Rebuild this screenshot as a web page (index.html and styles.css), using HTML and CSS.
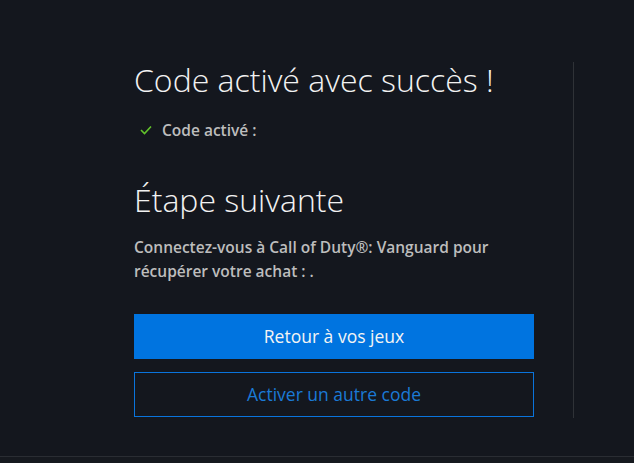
FILE: index.html
```html
<!DOCTYPE html>
<html lang="fr">
<head>
    <meta charset="UTF-8">
    <title>Code activé</title>
    <link rel="stylesheet" href="styles.css">
</head>
<body>
<div class="page">
    <main class="redeem">
        <section class="result">
            <h1>Code activé avec succès !</h1>
            <ul class="codes">
                <li>
                    <svg class="check" width="12" height="10" viewBox="0 0 12 10" aria-hidden="true">
                        <polyline points="1,5 4.5,8.5 11,1.5" fill="none" stroke="#62c32b" stroke-width="1.6"/>
                    </svg>
                    Code activé :
                </li>
            </ul>

            <h2>Étape suivante</h2>
            <p>Connectez-vous à Call of Duty®: Vanguard pour récupérer votre achat : .</p>

            <div class="actions">
                <a class="btn btn-primary" href="#">Retour à vos jeux</a>
                <a class="btn btn-outline" href="#">Activer un autre code</a>
            </div>
        </section>
        <aside class="side"></aside>
    </main>
</div>
<footer class="foot"></footer>
</body>
</html>
```

FILE: styles.css
```css
html, body {
    margin: 0;
    background: #14171e;
}
body {
    font-family: "Open Sans", "Noto Sans", sans-serif;
    color: #f2f2f2;
}

.page {
    height: 457px;
    border-bottom: 1px solid #2a2d33;
    box-sizing: border-box;
}

.redeem {
    display: flex;
    padding: 62px 0 0 134px;
}

.result {
    width: 400px;
}
.result h1,
.result h2 {
    margin: 0;
    font-size: 32px;
    font-weight: 300;
    line-height: 36px;
}
.result h2 {
    margin-top: 41px;
}

.codes {
    list-style: none;
    margin: 21px 0 0;
    padding: 0 0 0 6px;
}
.codes li {
    display: flex;
    align-items: center;
    gap: 10px;
    font-size: 15.5px;
    font-weight: 600;
    color: #bdbdbd;
}

.result p {
    margin: 17px 0 0;
    font-size: 15.5px;
    font-weight: 600;
    line-height: 24px;
    color: #bdbdbd;
}

.actions {
    display: flex;
    flex-direction: column;
    gap: 13px;
    margin-top: 31px;
}
.btn {
    display: block;
    height: 45px;
    line-height: 45px;
    text-align: center;
    font-size: 17.5px;
    text-decoration: none;
    box-sizing: border-box;
}
.btn-primary {
    background: #0074e0;
    color: #f4f4f4;
}
.btn-outline {
    border: 1px solid #0a74dc;
    line-height: 43px;
    color: #1b7ad6;
}

.side {
    margin-left: 39px;
    height: 356px;
    border-left: 1px solid #2f3237;
}

.foot {
    height: 6px;
    background: #16191f;
}
```
